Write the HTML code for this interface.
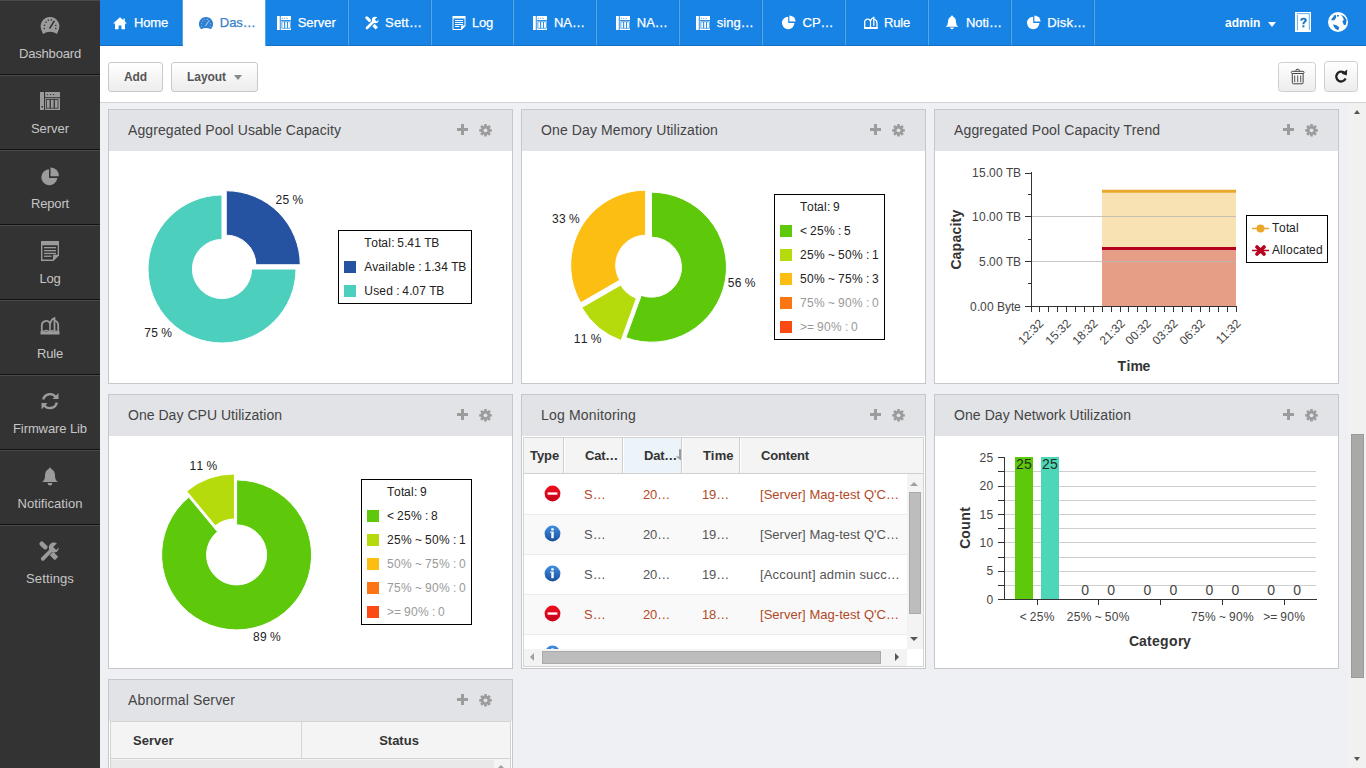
<!DOCTYPE html>
<html><head><meta charset="utf-8"><style>
*{box-sizing:border-box;margin:0;padding:0}
html,body{width:1366px;height:768px;overflow:hidden;background:#eff0f4;font-family:"Liberation Sans",sans-serif}
.abs{position:absolute}
#side{position:absolute;left:0;top:0;width:100px;height:768px;background:#333333}
.si{position:absolute;left:0;width:100px;height:75px;border-bottom:1px solid #111;box-shadow:inset 0 1px 0 #4a4a4a}
.si.last{border-bottom:none}
.si .lbl{position:absolute;left:0;width:100px;top:46px;text-align:center;font-size:13px;color:#c6c6c6;line-height:16px}
.si svg{position:absolute;left:40px;top:16px}
#nav{position:absolute;left:100px;top:0;width:1266px;height:46px;background:#1683e5;box-shadow:inset 0 -1px 0 #1b6fc0}
.tab{position:absolute;top:0;height:45px;border-right:1px solid #4ea8f0;box-shadow:inset -1px 0 0 #1d7ccc;color:#fff;font-size:13px}
.tab .tc{position:absolute;left:0;right:0;top:0;height:45px;display:flex;align-items:center;justify-content:center;padding-right:1.5px}
.tab .tc svg{margin-right:5.5px;flex:none}
.tab .tc span{line-height:16px;white-space:nowrap;-webkit-text-stroke:0.25px currentColor}
.tab .tc.tr{padding-left:7.9px}
.tab.act{background:#fff;color:#3a7fc8;box-shadow:none;height:46px}
#tool{position:absolute;left:100px;top:46px;width:1266px;height:57px;background:#fff;border-bottom:1px solid #d3d4d8}
.btn{position:absolute;height:30px;border:1px solid #c9c9c9;border-radius:3px;background:linear-gradient(#ffffff,#ececec);font-size:12px;font-weight:bold;color:#555;line-height:28px;text-align:center}
.panel{position:absolute;width:405px;height:275px;border:1px solid #c5c7cc;background:#fff}
.ph{position:absolute;left:0;top:0;width:403px;height:41px;background:#e2e3e7}
.ph .tt{position:absolute;left:19px;top:12px;font-size:14px;color:#444;line-height:16px;white-space:nowrap}
.ph svg{position:absolute}
#sb{position:absolute;left:1348px;top:103px;width:18px;height:665px;background:#f1f1f1}
</style></head><body>

<div id="side">
<div class="si" style="top:0px"><svg width="20" height="19" viewBox="0 0 20 19" style="top:16px"><path d="M10 1A9.3 9.3 0 0 0 1.2 13.5L3 18Q10 13.5 17 18L18.8 13.5A9.3 9.3 0 0 0 10 1Z" fill="#9b9b9b"/><g fill="#333"><circle cx="4.3" cy="12.5" r=".8"/><circle cx="4.5" cy="9.2" r=".8"/><circle cx="6" cy="6.3" r=".8"/><circle cx="8.3" cy="4.3" r=".8"/><circle cx="11.3" cy="3.9" r=".8"/><circle cx="14.2" cy="5.3" r=".8"/><circle cx="15.8" cy="9.5" r=".8"/><circle cx="15.8" cy="12.5" r=".8"/></g><path d="M9.5 12.5L14 5.5" stroke="#333" stroke-width="1.4"/></svg><div class="lbl" style="letter-spacing:-0.177px">Dashboard</div></div>
<div class="si" style="top:75px"><svg width="20" height="20" viewBox="0 0 20 20" style="top:16px"><rect x="0" y="1" width="20" height="18" fill="#9b9b9b"/><g fill="#333"><rect x="4" y="1" width="1.1" height="18"/><rect x="5" y="6.2" width="15" height="1"/><circle cx="7.6" cy="3.6" r=".7"/><circle cx="10.6" cy="3.6" r=".7"/><circle cx="13.6" cy="3.6" r=".7"/><rect x="1.6" y="15" width="1.4" height="1.6"/></g><g fill="none" stroke="#333" stroke-width=".8"><rect x="6.4" y="8.4" width="3.6" height="8.8"/><rect x="10.4" y="8.4" width="3.6" height="8.8"/><rect x="14.4" y="8.4" width="3.6" height="8.8"/></g></svg><div class="lbl" style="letter-spacing:-0.048px">Server</div></div>
<div class="si" style="top:150px"><svg width="20" height="20" viewBox="0 0 20 20" style="top:16px"><path d="M9 3.2A8 8 0 1 0 17.3 12H9Z" fill="#9b9b9b"/><path d="M10.5 1.5A8 8 0 0 1 18.8 10.3H10.5Z" fill="#9b9b9b"/></svg><div class="lbl" style="letter-spacing:-0.170px">Report</div></div>
<div class="si" style="top:225px"><svg width="20" height="21" viewBox="0 0 20 21" style="top:16px"><path d="M1 0H19V14.5L13.5 20H1Z" fill="#9b9b9b"/><path d="M2.4 4.3H17.7V13.8H13V18.6H2.4Z" fill="#333"/><g fill="#9b9b9b"><rect x="4" y="6" width="12" height="1.3"/><rect x="4" y="9" width="12" height="1.3"/><rect x="4" y="11.8" width="12" height="1.3"/><rect x="4" y="14.6" width="7.5" height="1.3"/></g></svg><div class="lbl" style="letter-spacing:-0.230px">Log</div></div>
<div class="si" style="top:300px"><svg width="20" height="20" viewBox="0 0 20 20" style="top:16px"><path d="M1.8 17V9A4.3 4.3 0 0 1 10 7.5Q11.5 3.2 14.5 2.2V14" fill="none" stroke="#9b9b9b" stroke-width="1.8"/><path d="M14.5 4.5Q18.2 5.5 18.2 9.5V17" fill="none" stroke="#9b9b9b" stroke-width="1.8"/><path d="M10 7.5V16" stroke="#9b9b9b" stroke-width="1.6"/><rect x="0.5" y="15.5" width="19" height="3" fill="#9b9b9b"/><path d="M2.5 15.8Q6 13 9.8 15.8Q13 13.5 17.5 15.8" fill="none" stroke="#9b9b9b" stroke-width="1.5"/></svg><div class="lbl" style="letter-spacing:-0.184px">Rule</div></div>
<div class="si" style="top:375px"><svg width="20" height="20" viewBox="0 0 20 20" style="top:16px"><path d="M16 6.5A7 7 0 0 0 3.2 8.5" fill="none" stroke="#9b9b9b" stroke-width="2.4"/><path d="M12.5 8H18.5V2Z" fill="#9b9b9b"/><path d="M3.8 13.5A7 7 0 0 0 16.8 11.5" fill="none" stroke="#9b9b9b" stroke-width="2.4"/><path d="M7.5 12H1.5V18.5Z" fill="#9b9b9b"/></svg><div class="lbl" style="letter-spacing:-0.094px">Firmware Lib</div></div>
<div class="si" style="top:450px"><svg width="20" height="20" viewBox="0 0 20 20" style="top:16px"><path d="M10 1.5Q11 1.5 11.3 3Q15 4.5 15 10Q15 14 18 16H2Q5 14 5 10Q5 4.5 8.7 3Q9 1.5 10 1.5Z" fill="#9b9b9b"/><path d="M7.5 17H12.5Q12 19.5 10 19.5Q8 19.5 7.5 17Z" fill="#9b9b9b"/></svg><div class="lbl" style="letter-spacing:0.058px">Notification</div></div>
<div class="si last" style="top:525px"><svg width="22" height="22" viewBox="0 0 22 22" style="top:16px;left:39px"><path d="M2.8 2.8L6.2 6.2" stroke="#9b9b9b" stroke-width="4.6" stroke-linecap="round"/><path d="M12.5 12.5L17.5 17.5" stroke="#9b9b9b" stroke-width="4.8"/><path d="M3.8 17.8L11.5 10" stroke="#9b9b9b" stroke-width="3.8" stroke-linecap="round"/><circle cx="14.8" cy="6.6" r="5" fill="#9b9b9b"/><path d="M14.2 6L19 1.2L22 4.2L17.2 9Z" fill="#333"/></svg><div class="lbl" style="letter-spacing:0.128px">Settings</div></div>
</div>
<div id="nav">
<div class="tab" style="left:0.0px;width:82.9px"><div class="tc"><svg width="16" height="14" viewBox="0 0 16 14"><path d="M8 1.3L1 7.6H3V13.2H6.6V9.6H9.4V13.2H13V7.6H15L12.8 5.6V2.4H11.4V4.3Z" fill="#fff"/></svg><span style="letter-spacing:-0.169px">Home</span></div></div>
<div class="tab act" style="left:82.9px;width:82.9px"><div class="tc tr"><svg width="16" height="14" viewBox="0 0 16 14"><path d="M8 1A7 7 0 0 0 1.5 10.8L3 13.3Q8 10.5 13 13.3L14.5 10.8A7 7 0 0 0 8 1Z" fill="#2f80d1"/><g fill="#9cc5ee"><circle cx="3.6" cy="10.3" r=".55"/><circle cx="3.6" cy="7.6" r=".55"/><circle cx="4.8" cy="5" r=".55"/><circle cx="6.8" cy="3.5" r=".55"/><circle cx="9.3" cy="3.4" r=".55"/><circle cx="12.4" cy="7.6" r=".55"/><circle cx="12.4" cy="10.3" r=".55"/></g><path d="M7.4 10L11.2 4.2" stroke="#9cc5ee" stroke-width="1.1"/></svg><span style="letter-spacing:-0.030px">Das…</span></div></div>
<div class="tab" style="left:165.8px;width:82.9px"><div class="tc"><svg width="16" height="14" viewBox="0 0 16 14"><rect x="1" y="0" width="14" height="14" fill="#fff"/><g fill="#1783e2"><rect x="3.8" y="0" width=".9" height="14"/><rect x="4.7" y="4.1" width="10.3" height=".9"/><circle cx="6.6" cy="2.2" r=".5"/><circle cx="8.8" cy="2.2" r=".5"/><circle cx="11" cy="2.2" r=".5"/></g><g fill="none" stroke="#1783e2" stroke-width=".7"><rect x="5.9" y="5.8" width="2.6" height="6.4"/><rect x="8.8" y="5.8" width="2.6" height="6.4"/><rect x="11.7" y="5.8" width="2.6" height="6.4"/></g></svg><span style="letter-spacing:-0.048px">Server</span></div></div>
<div class="tab" style="left:248.7px;width:82.9px"><div class="tc tr"><svg width="16" height="14" viewBox="0 0 16 14"><path d="M2.8 1.8L5.4 4.4" stroke="#fff" stroke-width="3" stroke-linecap="round"/><path d="M9.5 9L12.8 12.3" stroke="#fff" stroke-width="3.2"/><path d="M3 12L9 6" stroke="#fff" stroke-width="2.6" stroke-linecap="round"/><circle cx="11.2" cy="4" r="3.3" fill="#fff"/><path d="M10.8 3.6L14 0.4L16 2.4L12.8 5.6Z" fill="#1783e2"/></svg><span style="letter-spacing:0.175px">Sett…</span></div></div>
<div class="tab" style="left:331.6px;width:82.9px"><div class="tc"><svg width="16" height="14" viewBox="0 0 16 14"><path d="M1.5 0H14.5V10L10.5 14H1.5Z" fill="#fff"/><path d="M2.5 2.4H13.5V9.5H10V13H2.5Z" fill="#1783e2"/><g fill="#fff"><rect x="4" y="4" width="8" height="1"/><rect x="4" y="6" width="8" height="1"/><rect x="4" y="8" width="8" height="1"/><rect x="4" y="10" width="4.5" height="1"/></g></svg><span style="letter-spacing:-0.230px">Log</span></div></div>
<div class="tab" style="left:414.5px;width:82.9px"><div class="tc tr"><svg width="16" height="14" viewBox="0 0 16 14"><rect x="1" y="0" width="14" height="14" fill="#fff"/><g fill="#1783e2"><rect x="3.8" y="0" width=".9" height="14"/><rect x="4.7" y="4.1" width="10.3" height=".9"/><circle cx="6.6" cy="2.2" r=".5"/><circle cx="8.8" cy="2.2" r=".5"/><circle cx="11" cy="2.2" r=".5"/></g><g fill="none" stroke="#1783e2" stroke-width=".7"><rect x="5.9" y="5.8" width="2.6" height="6.4"/><rect x="8.8" y="5.8" width="2.6" height="6.4"/><rect x="11.7" y="5.8" width="2.6" height="6.4"/></g></svg><span style="letter-spacing:-0.020px">NA…</span></div></div>
<div class="tab" style="left:497.4px;width:82.9px"><div class="tc tr"><svg width="16" height="14" viewBox="0 0 16 14"><rect x="1" y="0" width="14" height="14" fill="#fff"/><g fill="#1783e2"><rect x="3.8" y="0" width=".9" height="14"/><rect x="4.7" y="4.1" width="10.3" height=".9"/><circle cx="6.6" cy="2.2" r=".5"/><circle cx="8.8" cy="2.2" r=".5"/><circle cx="11" cy="2.2" r=".5"/></g><g fill="none" stroke="#1783e2" stroke-width=".7"><rect x="5.9" y="5.8" width="2.6" height="6.4"/><rect x="8.8" y="5.8" width="2.6" height="6.4"/><rect x="11.7" y="5.8" width="2.6" height="6.4"/></g></svg><span style="letter-spacing:-0.020px">NA…</span></div></div>
<div class="tab" style="left:580.3px;width:82.9px"><div class="tc tr"><svg width="16" height="14" viewBox="0 0 16 14"><rect x="1" y="0" width="14" height="14" fill="#fff"/><g fill="#1783e2"><rect x="3.8" y="0" width=".9" height="14"/><rect x="4.7" y="4.1" width="10.3" height=".9"/><circle cx="6.6" cy="2.2" r=".5"/><circle cx="8.8" cy="2.2" r=".5"/><circle cx="11" cy="2.2" r=".5"/></g><g fill="none" stroke="#1783e2" stroke-width=".7"><rect x="5.9" y="5.8" width="2.6" height="6.4"/><rect x="8.8" y="5.8" width="2.6" height="6.4"/><rect x="11.7" y="5.8" width="2.6" height="6.4"/></g></svg><span style="letter-spacing:0.030px">sing…</span></div></div>
<div class="tab" style="left:663.2px;width:82.9px"><div class="tc tr"><svg width="16" height="15" viewBox="0 0 16 15"><path d="M7.2 1.8A6.2 6.2 0 1 0 13.4 8H7.2Z" fill="#fff"/><path d="M8.4 0.4A6.2 6.2 0 0 1 14.6 6.6H8.4Z" fill="#fff"/></svg><span style="letter-spacing:-0.020px">CP…</span></div></div>
<div class="tab" style="left:746.1px;width:82.9px"><div class="tc"><svg width="16" height="13" viewBox="0 0 16 13"><path d="M1.7 12V6A3 3 0 0 1 7.5 5Q8.5 2 10.8 1.3V10" fill="none" stroke="#fff" stroke-width="1.3"/><path d="M10.8 3Q14 4 14 7V12" fill="none" stroke="#fff" stroke-width="1.3"/><path d="M7.5 5V11.5" stroke="#fff" stroke-width="1.2"/><rect x="1" y="11" width="13.7" height="2" fill="#fff"/></svg><span style="letter-spacing:-0.184px">Rule</span></div></div>
<div class="tab" style="left:829.0px;width:82.9px"><div class="tc tr"><svg width="16" height="15" viewBox="0 0 16 15"><path d="M8 0.5Q9 0.5 9.2 1.8Q12 3 12 7Q12 10.5 14.3 11.8H1.7Q4 10.5 4 7Q4 3 6.8 1.8Q7 0.5 8 0.5Z" fill="#fff"/><path d="M6 12.6H10Q10 14.3 8 14.3Q6 14.3 6 12.6Z" fill="#fff"/></svg><span style="letter-spacing:-0.024px">Noti…</span></div></div>
<div class="tab" style="left:911.9px;width:82.9px"><div class="tc tr"><svg width="16" height="15" viewBox="0 0 16 15"><path d="M7.2 1.8A6.2 6.2 0 1 0 13.4 8H7.2Z" fill="#fff"/><path d="M8.4 0.4A6.2 6.2 0 0 1 14.6 6.6H8.4Z" fill="#fff"/></svg><span style="letter-spacing:0.145px">Disk…</span></div></div>
<div class="abs" style="left:1125px;top:15px;font-size:12px;font-weight:bold;color:#fff;line-height:16px">admin</div>
<div class="abs" style="left:1168px;top:22px;width:0;height:0;border-left:4px solid transparent;border-right:4px solid transparent;border-top:5px solid #fff"></div>
<svg class="abs" style="left:1194px;top:12px" width="18" height="20" viewBox="0 0 18 20"><rect x="1" y="0" width="16" height="20" fill="#fff"/><path d="M3 1.6H15.3V18M3.4 3V18.5" fill="none" stroke="#1783e2" stroke-width="0.9" opacity=".75"/><path d="M6.2 8.6Q6.2 5.7 9.5 5.7Q12.8 5.8 12.8 8.3Q12.8 9.8 11.3 10.6Q10.4 11.1 10.4 12.3H8.4Q8.3 10.3 9.7 9.4Q10.6 8.9 10.6 8.3Q10.5 7.4 9.5 7.4Q8.3 7.4 8.3 8.8Z" fill="#1a74c8"/><rect x="8.4" y="13.3" width="2" height="2" fill="#1a74c8"/></svg>
<svg class="abs" style="left:1227px;top:12px" width="21" height="20" viewBox="0 0 21 20"><circle cx="11" cy="10" r="10" fill="#fff"/><g fill="#1a7ad4"><path d="M3.8 8.2L8 2.6Q9.6 3.8 9.1 5.6L7.4 8.2Z"/><circle cx="10.9" cy="3.8" r="1"/><path d="M14.2 2.4Q18.2 4.3 19.6 8L18.9 12.5L17 13.2L15.4 9.4L16.9 7.4Q15.6 5 14.2 2.4Z"/><path d="M6 12.6Q9.2 12.2 12.4 15.4L11.2 18.2Q7.8 17.6 6 12.6Z"/></g></svg>
</div>
<div id="tool">
  <div class="btn" style="left:8px;top:16px;width:55px;letter-spacing:-0.109px">Add</div>
  <div class="btn" style="left:71px;top:16px;width:87px;padding-right:16px"><span style="letter-spacing:-0.056px">Layout</span><span style="position:absolute;left:62px;top:12px;width:0;height:0;border-left:4px solid transparent;border-right:4px solid transparent;border-top:5px solid #888"></span></div>
  <svg class="abs" style="left:1178px;top:16px" width="38" height="30" viewBox="0 0 38 30"><defs><linearGradient id="bg1" x1="0" y1="0" x2="0" y2="1"><stop offset="0" stop-color="#fff"/><stop offset="1" stop-color="#ececec"/></linearGradient></defs><rect x="0.5" y="0.5" width="37" height="29" rx="3" fill="url(#bg1)" stroke="#cfcfcf"/><rect x="13.4" y="9.3" width="12.6" height="2.2" rx="1" fill="none" stroke="#444" stroke-width="1"/><path d="M18 9.3V8.3Q18 7.3 19 7.3H20.4Q21.4 7.3 21.4 8.3V9.3M14.3 11.5V20.7Q14.3 21.8 15.4 21.8H24Q25.1 21.8 25.1 20.7V11.5" fill="none" stroke="#444" stroke-width="1"/><path d="M16.7 13.5V20.2M19.7 13.5V20.2M22.7 13.5V20.2" stroke="#444" stroke-width=".9"/></svg>
  <svg class="abs" style="left:1224px;top:15px" width="34" height="31" viewBox="0 0 34 31"><rect x="0.5" y="0.5" width="33" height="30" rx="3" fill="url(#bg1)" stroke="#cfcfcf"/><path d="M20.8 12.3A4.9 4.9 0 1 0 21.6 17.6" fill="none" stroke="#222" stroke-width="2.3"/><path d="M17.6 12.8L22.8 14.4L23.2 8.6Z" fill="#222"/></svg>
</div>
<div class="panel" style="left:108px;top:109px;height:275px"><div class="ph"><div class="tt" style="letter-spacing:0.093px">Aggregated Pool Usable Capacity</div><svg style="left:348px;top:14px" width="40" height="15" viewBox="0 0 40 15"><path d="M4 0H7V4H11V7H7V11H4V7H0V4H4Z" fill="#9c9c9d"/><g transform="translate(28.5,6.3)" fill="#9c9c9d"><circle r="4.6"/><rect x="-1.35" y="-6.3" width="2.7" height="3" rx=".4" transform="rotate(0)"/><rect x="-1.35" y="-6.3" width="2.7" height="3" rx=".4" transform="rotate(45)"/><rect x="-1.35" y="-6.3" width="2.7" height="3" rx=".4" transform="rotate(90)"/><rect x="-1.35" y="-6.3" width="2.7" height="3" rx=".4" transform="rotate(135)"/><rect x="-1.35" y="-6.3" width="2.7" height="3" rx=".4" transform="rotate(180)"/><rect x="-1.35" y="-6.3" width="2.7" height="3" rx=".4" transform="rotate(225)"/><rect x="-1.35" y="-6.3" width="2.7" height="3" rx=".4" transform="rotate(270)"/><rect x="-1.35" y="-6.3" width="2.7" height="3" rx=".4" transform="rotate(315)"/><circle r="1.9" fill="#e2e3e7"/></g></svg></div></div>
<div class="panel" style="left:521px;top:109px;height:275px"><div class="ph"><div class="tt" style="letter-spacing:0.105px">One Day Memory Utilization</div><svg style="left:348px;top:14px" width="40" height="15" viewBox="0 0 40 15"><path d="M4 0H7V4H11V7H7V11H4V7H0V4H4Z" fill="#9c9c9d"/><g transform="translate(28.5,6.3)" fill="#9c9c9d"><circle r="4.6"/><rect x="-1.35" y="-6.3" width="2.7" height="3" rx=".4" transform="rotate(0)"/><rect x="-1.35" y="-6.3" width="2.7" height="3" rx=".4" transform="rotate(45)"/><rect x="-1.35" y="-6.3" width="2.7" height="3" rx=".4" transform="rotate(90)"/><rect x="-1.35" y="-6.3" width="2.7" height="3" rx=".4" transform="rotate(135)"/><rect x="-1.35" y="-6.3" width="2.7" height="3" rx=".4" transform="rotate(180)"/><rect x="-1.35" y="-6.3" width="2.7" height="3" rx=".4" transform="rotate(225)"/><rect x="-1.35" y="-6.3" width="2.7" height="3" rx=".4" transform="rotate(270)"/><rect x="-1.35" y="-6.3" width="2.7" height="3" rx=".4" transform="rotate(315)"/><circle r="1.9" fill="#e2e3e7"/></g></svg></div></div>
<div class="panel" style="left:934px;top:109px;height:275px"><div class="ph"><div class="tt" style="letter-spacing:0.129px">Aggregated Pool Capacity Trend</div><svg style="left:348px;top:14px" width="40" height="15" viewBox="0 0 40 15"><path d="M4 0H7V4H11V7H7V11H4V7H0V4H4Z" fill="#9c9c9d"/><g transform="translate(28.5,6.3)" fill="#9c9c9d"><circle r="4.6"/><rect x="-1.35" y="-6.3" width="2.7" height="3" rx=".4" transform="rotate(0)"/><rect x="-1.35" y="-6.3" width="2.7" height="3" rx=".4" transform="rotate(45)"/><rect x="-1.35" y="-6.3" width="2.7" height="3" rx=".4" transform="rotate(90)"/><rect x="-1.35" y="-6.3" width="2.7" height="3" rx=".4" transform="rotate(135)"/><rect x="-1.35" y="-6.3" width="2.7" height="3" rx=".4" transform="rotate(180)"/><rect x="-1.35" y="-6.3" width="2.7" height="3" rx=".4" transform="rotate(225)"/><rect x="-1.35" y="-6.3" width="2.7" height="3" rx=".4" transform="rotate(270)"/><rect x="-1.35" y="-6.3" width="2.7" height="3" rx=".4" transform="rotate(315)"/><circle r="1.9" fill="#e2e3e7"/></g></svg></div></div>
<div class="panel" style="left:108px;top:394px;height:275px"><div class="ph"><div class="tt" style="letter-spacing:0.032px">One Day CPU Utilization</div><svg style="left:348px;top:14px" width="40" height="15" viewBox="0 0 40 15"><path d="M4 0H7V4H11V7H7V11H4V7H0V4H4Z" fill="#9c9c9d"/><g transform="translate(28.5,6.3)" fill="#9c9c9d"><circle r="4.6"/><rect x="-1.35" y="-6.3" width="2.7" height="3" rx=".4" transform="rotate(0)"/><rect x="-1.35" y="-6.3" width="2.7" height="3" rx=".4" transform="rotate(45)"/><rect x="-1.35" y="-6.3" width="2.7" height="3" rx=".4" transform="rotate(90)"/><rect x="-1.35" y="-6.3" width="2.7" height="3" rx=".4" transform="rotate(135)"/><rect x="-1.35" y="-6.3" width="2.7" height="3" rx=".4" transform="rotate(180)"/><rect x="-1.35" y="-6.3" width="2.7" height="3" rx=".4" transform="rotate(225)"/><rect x="-1.35" y="-6.3" width="2.7" height="3" rx=".4" transform="rotate(270)"/><rect x="-1.35" y="-6.3" width="2.7" height="3" rx=".4" transform="rotate(315)"/><circle r="1.9" fill="#e2e3e7"/></g></svg></div></div>
<div class="panel" style="left:521px;top:394px;height:275px"><div class="ph"><div class="tt" style="letter-spacing:0.170px">Log Monitoring</div><svg style="left:348px;top:14px" width="40" height="15" viewBox="0 0 40 15"><path d="M4 0H7V4H11V7H7V11H4V7H0V4H4Z" fill="#9c9c9d"/><g transform="translate(28.5,6.3)" fill="#9c9c9d"><circle r="4.6"/><rect x="-1.35" y="-6.3" width="2.7" height="3" rx=".4" transform="rotate(0)"/><rect x="-1.35" y="-6.3" width="2.7" height="3" rx=".4" transform="rotate(45)"/><rect x="-1.35" y="-6.3" width="2.7" height="3" rx=".4" transform="rotate(90)"/><rect x="-1.35" y="-6.3" width="2.7" height="3" rx=".4" transform="rotate(135)"/><rect x="-1.35" y="-6.3" width="2.7" height="3" rx=".4" transform="rotate(180)"/><rect x="-1.35" y="-6.3" width="2.7" height="3" rx=".4" transform="rotate(225)"/><rect x="-1.35" y="-6.3" width="2.7" height="3" rx=".4" transform="rotate(270)"/><rect x="-1.35" y="-6.3" width="2.7" height="3" rx=".4" transform="rotate(315)"/><circle r="1.9" fill="#e2e3e7"/></g></svg></div></div>
<div class="panel" style="left:934px;top:394px;height:275px"><div class="ph"><div class="tt" style="letter-spacing:0.072px">One Day Network Utilization</div><svg style="left:348px;top:14px" width="40" height="15" viewBox="0 0 40 15"><path d="M4 0H7V4H11V7H7V11H4V7H0V4H4Z" fill="#9c9c9d"/><g transform="translate(28.5,6.3)" fill="#9c9c9d"><circle r="4.6"/><rect x="-1.35" y="-6.3" width="2.7" height="3" rx=".4" transform="rotate(0)"/><rect x="-1.35" y="-6.3" width="2.7" height="3" rx=".4" transform="rotate(45)"/><rect x="-1.35" y="-6.3" width="2.7" height="3" rx=".4" transform="rotate(90)"/><rect x="-1.35" y="-6.3" width="2.7" height="3" rx=".4" transform="rotate(135)"/><rect x="-1.35" y="-6.3" width="2.7" height="3" rx=".4" transform="rotate(180)"/><rect x="-1.35" y="-6.3" width="2.7" height="3" rx=".4" transform="rotate(225)"/><rect x="-1.35" y="-6.3" width="2.7" height="3" rx=".4" transform="rotate(270)"/><rect x="-1.35" y="-6.3" width="2.7" height="3" rx=".4" transform="rotate(315)"/><circle r="1.9" fill="#e2e3e7"/></g></svg></div></div>
<div class="panel" style="left:108px;top:679px;height:120px"><div class="ph"><div class="tt" style="letter-spacing:0.131px">Abnormal Server</div><svg style="left:348px;top:14px" width="40" height="15" viewBox="0 0 40 15"><path d="M4 0H7V4H11V7H7V11H4V7H0V4H4Z" fill="#9c9c9d"/><g transform="translate(28.5,6.3)" fill="#9c9c9d"><circle r="4.6"/><rect x="-1.35" y="-6.3" width="2.7" height="3" rx=".4" transform="rotate(0)"/><rect x="-1.35" y="-6.3" width="2.7" height="3" rx=".4" transform="rotate(45)"/><rect x="-1.35" y="-6.3" width="2.7" height="3" rx=".4" transform="rotate(90)"/><rect x="-1.35" y="-6.3" width="2.7" height="3" rx=".4" transform="rotate(135)"/><rect x="-1.35" y="-6.3" width="2.7" height="3" rx=".4" transform="rotate(180)"/><rect x="-1.35" y="-6.3" width="2.7" height="3" rx=".4" transform="rotate(225)"/><rect x="-1.35" y="-6.3" width="2.7" height="3" rx=".4" transform="rotate(270)"/><rect x="-1.35" y="-6.3" width="2.7" height="3" rx=".4" transform="rotate(315)"/><circle r="1.9" fill="#e2e3e7"/></g></svg></div></div>
<div class="abs" style="left:523px;top:437px;width:401px;height:230px;border:1px solid #d4d4d4;background:#fff;overflow:hidden">
<div class="abs" style="left:0;top:0;width:399px;height:36px;background:#f4f4f4;border-bottom:1px solid #d0d0d0"></div>
<div class="abs" style="left:99px;top:0;width:58px;height:35px;background:#ecf3f9"></div>
<div class="abs" style="left:39px;top:0;width:1px;height:35px;background:#cdcdcd"></div><div class="abs" style="left:40px;top:0;width:1px;height:35px;background:#fff"></div>
<div class="abs" style="left:98px;top:0;width:1px;height:35px;background:#cdcdcd"></div><div class="abs" style="left:99px;top:0;width:1px;height:35px;background:#fff"></div>
<div class="abs" style="left:157px;top:0;width:1px;height:35px;background:#cdcdcd"></div><div class="abs" style="left:158px;top:0;width:1px;height:35px;background:#fff"></div>
<div class="abs" style="left:215px;top:0;width:1px;height:35px;background:#cdcdcd"></div><div class="abs" style="left:216px;top:0;width:1px;height:35px;background:#fff"></div>
<div class="abs" style="left:6px;top:10px;font-size:13px;font-weight:bold;color:#333;line-height:16px;letter-spacing:-0.085px">Type</div>
<div class="abs" style="left:61px;top:10px;font-size:13px;font-weight:bold;color:#333;line-height:16px;letter-spacing:-0.237px">Cat…</div>
<div class="abs" style="left:120px;top:10px;font-size:13px;font-weight:bold;color:#333;line-height:16px;letter-spacing:-0.237px">Dat…</div>
<div class="abs" style="left:179px;top:10px;font-size:13px;font-weight:bold;color:#333;line-height:16px;letter-spacing:0.165px">Time</div>
<div class="abs" style="left:237px;top:10px;font-size:13px;font-weight:bold;color:#333;line-height:16px;letter-spacing:-0.157px">Content</div>
<svg class="abs" style="left:151px;top:11px" width="6" height="12" viewBox="0 0 6 12"><path d="M4 0.3H6V11.5L0.6 7.4H4Z" fill="#999"/></svg>
<div class="abs" style="left:0;top:37px;width:383px;height:40px;background:#fff;border-bottom:1px solid #ececec"></div>
<div class="abs" style="left:19.5px;top:47px;width:17px;height:17px"><svg width="17" height="17" viewBox="0 0 17 17"><defs><linearGradient id="eg" x1="0" y1="0" x2="0" y2="1"><stop offset="0" stop-color="#f0101e"/><stop offset="1" stop-color="#c8001a"/></linearGradient></defs><circle cx="8.5" cy="8.5" r="7.9" fill="url(#eg)"/><rect x="3.6" y="7.4" width="9.8" height="2.3" fill="#fff"/></svg></div>
<div class="abs" style="left:60px;top:49px;font-size:13px;color:#b04a28;line-height:16px;white-space:nowrap;letter-spacing:0.165px">S…</div>
<div class="abs" style="left:119px;top:49px;font-size:13px;color:#b04a28;line-height:16px;white-space:nowrap;letter-spacing:-0.153px">20…</div>
<div class="abs" style="left:178px;top:49px;font-size:13px;color:#b04a28;line-height:16px;white-space:nowrap;letter-spacing:-0.153px">19…</div>
<div class="abs" style="left:236px;top:49px;font-size:13px;color:#b04a28;line-height:16px;white-space:nowrap;letter-spacing:0.032px">[Server] Mag-test Q'C…</div>
<div class="abs" style="left:0;top:77px;width:383px;height:40px;background:#f9f9f9;border-bottom:1px solid #ececec"></div>
<div class="abs" style="left:19.5px;top:87px;width:17px;height:17px"><svg width="17" height="17" viewBox="0 0 17 17"><defs><linearGradient id="ig" x1="0" y1="0" x2="0" y2="1"><stop offset="0" stop-color="#3f8fe0"/><stop offset="1" stop-color="#1a4f9e"/></linearGradient></defs><circle cx="8.5" cy="8.5" r="7.9" fill="url(#ig)"/><rect x="7.3" y="3.3" width="2.4" height="2.2" fill="#fff"/><rect x="7.3" y="6.6" width="2.4" height="6.6" fill="#fff"/><rect x="6.2" y="6.6" width="1.3" height="1.2" fill="#fff"/></svg></div>
<div class="abs" style="left:60px;top:89px;font-size:13px;color:#555;line-height:16px;white-space:nowrap;letter-spacing:0.165px">S…</div>
<div class="abs" style="left:119px;top:89px;font-size:13px;color:#555;line-height:16px;white-space:nowrap;letter-spacing:-0.153px">20…</div>
<div class="abs" style="left:178px;top:89px;font-size:13px;color:#555;line-height:16px;white-space:nowrap;letter-spacing:-0.153px">19…</div>
<div class="abs" style="left:236px;top:89px;font-size:13px;color:#555;line-height:16px;white-space:nowrap;letter-spacing:0.032px">[Server] Mag-test Q'C…</div>
<div class="abs" style="left:0;top:117px;width:383px;height:40px;background:#fff;border-bottom:1px solid #ececec"></div>
<div class="abs" style="left:19.5px;top:127px;width:17px;height:17px"><svg width="17" height="17" viewBox="0 0 17 17"><defs><linearGradient id="ig" x1="0" y1="0" x2="0" y2="1"><stop offset="0" stop-color="#3f8fe0"/><stop offset="1" stop-color="#1a4f9e"/></linearGradient></defs><circle cx="8.5" cy="8.5" r="7.9" fill="url(#ig)"/><rect x="7.3" y="3.3" width="2.4" height="2.2" fill="#fff"/><rect x="7.3" y="6.6" width="2.4" height="6.6" fill="#fff"/><rect x="6.2" y="6.6" width="1.3" height="1.2" fill="#fff"/></svg></div>
<div class="abs" style="left:60px;top:129px;font-size:13px;color:#555;line-height:16px;white-space:nowrap;letter-spacing:0.165px">S…</div>
<div class="abs" style="left:119px;top:129px;font-size:13px;color:#555;line-height:16px;white-space:nowrap;letter-spacing:-0.153px">20…</div>
<div class="abs" style="left:178px;top:129px;font-size:13px;color:#555;line-height:16px;white-space:nowrap;letter-spacing:-0.153px">19…</div>
<div class="abs" style="left:236px;top:129px;font-size:13px;color:#555;line-height:16px;white-space:nowrap;letter-spacing:0.164px">[Account] admin succ…</div>
<div class="abs" style="left:0;top:157px;width:383px;height:40px;background:#f9f9f9;border-bottom:1px solid #ececec"></div>
<div class="abs" style="left:19.5px;top:167px;width:17px;height:17px"><svg width="17" height="17" viewBox="0 0 17 17"><defs><linearGradient id="eg" x1="0" y1="0" x2="0" y2="1"><stop offset="0" stop-color="#f0101e"/><stop offset="1" stop-color="#c8001a"/></linearGradient></defs><circle cx="8.5" cy="8.5" r="7.9" fill="url(#eg)"/><rect x="3.6" y="7.4" width="9.8" height="2.3" fill="#fff"/></svg></div>
<div class="abs" style="left:60px;top:169px;font-size:13px;color:#b04a28;line-height:16px;white-space:nowrap;letter-spacing:0.165px">S…</div>
<div class="abs" style="left:119px;top:169px;font-size:13px;color:#b04a28;line-height:16px;white-space:nowrap;letter-spacing:-0.153px">20…</div>
<div class="abs" style="left:178px;top:169px;font-size:13px;color:#b04a28;line-height:16px;white-space:nowrap;letter-spacing:-0.153px">18…</div>
<div class="abs" style="left:236px;top:169px;font-size:13px;color:#b04a28;line-height:16px;white-space:nowrap;letter-spacing:0.032px">[Server] Mag-test Q'C…</div>
<div class="abs" style="left:0;top:197px;width:383px;height:40px;background:#fff;border-bottom:1px solid #ececec"></div>
<div class="abs" style="left:19.5px;top:207px;width:17px;height:17px"><svg width="17" height="17" viewBox="0 0 17 17"><defs><linearGradient id="ig" x1="0" y1="0" x2="0" y2="1"><stop offset="0" stop-color="#3f8fe0"/><stop offset="1" stop-color="#1a4f9e"/></linearGradient></defs><circle cx="8.5" cy="8.5" r="7.9" fill="url(#ig)"/><rect x="7.3" y="3.3" width="2.4" height="2.2" fill="#fff"/><rect x="7.3" y="6.6" width="2.4" height="6.6" fill="#fff"/><rect x="6.2" y="6.6" width="1.3" height="1.2" fill="#fff"/></svg></div>
<div class="abs" style="left:383px;top:36px;width:16px;height:175px;background:#f3f3f3"></div>
<div class="abs" style="left:386px;top:44px;width:0;height:0;border-left:4px solid transparent;border-right:4px solid transparent;border-bottom:4px solid #a0a0a0"></div>
<div class="abs" style="left:385px;top:54px;width:12px;height:122px;background:#bdbdbd;border:1px solid #aaa"></div>
<div class="abs" style="left:386px;top:199px;width:0;height:0;border-left:4px solid transparent;border-right:4px solid transparent;border-top:4px solid #555"></div>
<div class="abs" style="left:0;top:211px;width:383px;height:17px;background:#f3f3f3"></div>
<div class="abs" style="left:383px;top:211px;width:16px;height:17px;background:#fff"></div>
<div class="abs" style="left:6px;top:215px;width:0;height:0;border-top:4px solid transparent;border-bottom:4px solid transparent;border-right:4px solid #a0a0a0"></div>
<div class="abs" style="left:18px;top:213px;width:339px;height:13px;background:#bdbdbd;border:1px solid #aaa"></div>
<div class="abs" style="left:371px;top:215px;width:0;height:0;border-top:4px solid transparent;border-bottom:4px solid transparent;border-left:4px solid #555"></div>
</div>
<div class="abs" style="left:110px;top:721px;width:401px;height:60px;border:1px solid #d4d4d4;background:#f4f4f4">
<div class="abs" style="left:0;top:0;width:399px;height:37px;background:#f4f4f4;border-bottom:1px solid #d0d0d0"></div>
<div class="abs" style="left:190px;top:0;width:1px;height:37px;background:#d6d6d6"></div>
<div class="abs" style="left:22px;top:11px;font-size:13px;font-weight:bold;color:#333;line-height:16px">Server</div>
<div class="abs" style="left:192.5px;width:191px;text-align:center;top:11px;font-size:13px;font-weight:bold;color:#333;line-height:16px">Status</div>
<div class="abs" style="left:0;top:38px;width:383px;height:30px;background:#e9e9e9"></div>
<div class="abs" style="left:386px;top:43px;width:0;height:0;border-left:4px solid transparent;border-right:4px solid transparent;border-bottom:4px solid #a0a0a0"></div>
</div>
<svg class="abs" style="left:0;top:0;pointer-events:none" width="1366" height="768" font-family='"Liberation Sans",sans-serif'><path d="M296.00 269.00A74 74 0 1 1 222.00 195.00L222.00 239.40A29.6 29.6 0 1 0 251.60 269.00Z" fill="#4dcfbd" stroke="#fff" stroke-width="1"/><path d="M226.24 190.76A74 74 0 0 1 300.24 264.76L255.84 264.76A29.6 29.6 0 0 0 226.24 235.16Z" fill="#2652a2" stroke="#fff" stroke-width="1"/><text x="275.50 282.50 289.50 292.50" y="204" font-size="12" fill="#222" font-weight="normal" >25 %</text><text x="144.30 151.30 158.30 161.30" y="336.5" font-size="12" fill="#222" font-weight="normal" >75 %</text><rect x="338.5" y="230.5" width="133" height="73" fill="#fff" stroke="#000" stroke-width="1"/><text x="364.20 371.20 378.20 381.20 388.20 391.20 394.20 397.20 404.20 407.20 414.20 421.20 424.20 431.20" y="247" font-size="12" fill="#222" font-weight="normal" >Total: 5.41 TB</text><rect x="344" y="261" width="12" height="12" fill="#2652a2"/><text x="364.20 372.20 378.20 385.20 388.20 391.20 398.20 405.20 408.20 415.20 418.20 421.20 424.20 431.20 434.20 441.20 448.20 451.20 458.20" y="271" font-size="12" fill="#222" font-weight="normal" >Available : 1.34 TB</text><rect x="344" y="285" width="12" height="12" fill="#4dcfbd"/><text x="364.20 373.20 379.20 386.20 393.20 396.20 399.20 402.20 409.20 412.20 419.20 426.20 429.20 436.20" y="295" font-size="12" fill="#222" font-weight="normal" >Used : 4.07 TB</text><path d="M651.50 192.20A75 75 0 1 1 625.85 337.68L641.24 295.39A30 30 0 1 0 651.50 237.20Z" fill="#5ec90b" stroke="#fff" stroke-width="1"/><path d="M621.05 340.48A75 75 0 0 1 581.75 307.50L620.72 285.00A30 30 0 0 0 636.44 298.19Z" fill="#b6db0c" stroke="#fff" stroke-width="1"/><path d="M580.75 302.70A75 75 0 0 1 645.70 190.20L645.70 235.20A30 30 0 0 0 619.72 280.20Z" fill="#fcbe12" stroke="#fff" stroke-width="1"/><text x="552.00 559.00 566.00 569.00" y="223" font-size="12" fill="#222" font-weight="normal" >33 %</text><text x="727.80 734.80 741.80 744.80" y="287" font-size="12" fill="#222" font-weight="normal" >56 %</text><text x="573.70 580.70 587.70 590.70" y="343" font-size="12" fill="#222" font-weight="normal" >11 %</text><rect x="774.5" y="194.5" width="110" height="145" fill="#fff" stroke="#000" stroke-width="1"/><text x="800.00 807.00 814.00 817.00 824.00 827.00 830.00 833.00" y="211" font-size="12" fill="#222" font-weight="normal" >Total: 9</text><rect x="780" y="225" width="12" height="12" fill="#5ec90b"/><text x="800.00 807.00 810.00 817.00 824.00 835.00 838.00 841.00 844.00" y="235" font-size="12" fill="#222" font-weight="normal" >&lt; 25% : 5</text><rect x="780" y="249" width="12" height="12" fill="#b6db0c"/><text x="800.00 807.00 814.00 825.00 828.00 835.00 838.00 845.00 852.00 863.00 866.00 869.00 872.00" y="259" font-size="12" fill="#222" font-weight="normal" >25% ~ 50% : 1</text><rect x="780" y="273" width="12" height="12" fill="#fcbe12"/><text x="800.00 807.00 814.00 825.00 828.00 835.00 838.00 845.00 852.00 863.00 866.00 869.00 872.00" y="283" font-size="12" fill="#222" font-weight="normal" >50% ~ 75% : 3</text><rect x="780" y="297" width="12" height="12" fill="#fc7514"/><text x="800.00 807.00 814.00 825.00 828.00 835.00 838.00 845.00 852.00 863.00 866.00 869.00 872.00" y="307" font-size="12" fill="#999" font-weight="normal" >75% ~ 90% : 0</text><rect x="780" y="321" width="12" height="12" fill="#fb4b12"/><text x="800.00 807.00 814.00 817.00 824.00 831.00 842.00 845.00 848.00 851.00" y="331" font-size="12" fill="#999" font-weight="normal" >&gt;= 90% : 0</text><path d="M236.60 479.90A75 75 0 1 1 188.79 497.11L217.48 531.78A30 30 0 1 0 236.60 524.90Z" fill="#5ec90b" stroke="#fff" stroke-width="1"/><path d="M186.66 491.18A75 75 0 0 1 234.47 473.97L234.47 518.97A30 30 0 0 0 215.34 525.86Z" fill="#b6db0c" stroke="#fff" stroke-width="1"/><text x="189.60 196.60 203.60 206.60" y="470" font-size="12" fill="#222" font-weight="normal" >11 %</text><text x="253.00 260.00 267.00 270.00" y="641" font-size="12" fill="#222" font-weight="normal" >89 %</text><rect x="361.5" y="479.5" width="110" height="145" fill="#fff" stroke="#000" stroke-width="1"/><text x="387.00 394.00 401.00 404.00 411.00 414.00 417.00 420.00" y="496" font-size="12" fill="#222" font-weight="normal" >Total: 9</text><rect x="367" y="510" width="12" height="12" fill="#5ec90b"/><text x="387.00 394.00 397.00 404.00 411.00 422.00 425.00 428.00 431.00" y="520" font-size="12" fill="#222" font-weight="normal" >&lt; 25% : 8</text><rect x="367" y="534" width="12" height="12" fill="#b6db0c"/><text x="387.00 394.00 401.00 412.00 415.00 422.00 425.00 432.00 439.00 450.00 453.00 456.00 459.00" y="544" font-size="12" fill="#222" font-weight="normal" >25% ~ 50% : 1</text><rect x="367" y="558" width="12" height="12" fill="#fcbe12"/><text x="387.00 394.00 401.00 412.00 415.00 422.00 425.00 432.00 439.00 450.00 453.00 456.00 459.00" y="568" font-size="12" fill="#999" font-weight="normal" >50% ~ 75% : 0</text><rect x="367" y="582" width="12" height="12" fill="#fc7514"/><text x="387.00 394.00 401.00 412.00 415.00 422.00 425.00 432.00 439.00 450.00 453.00 456.00 459.00" y="592" font-size="12" fill="#999" font-weight="normal" >75% ~ 90% : 0</text><rect x="367" y="606" width="12" height="12" fill="#fb4b12"/><text x="387.00 394.00 401.00 404.00 411.00 418.00 429.00 432.00 435.00 438.00" y="616" font-size="12" fill="#999" font-weight="normal" >&gt;= 90% : 0</text><rect x="1102" y="191.5" width="134" height="57" fill="#f8e2b3"/><rect x="1102" y="248.5" width="134" height="58" fill="#e69e87"/><path d="M1031 216.5H1236" stroke="#b8b8b8" stroke-width="1" opacity="0.8"/><path d="M1031 261.5H1236" stroke="#b8b8b8" stroke-width="1" opacity="0.8"/><path d="M1102 191.3H1236" stroke="#e9a82b" stroke-width="3"/><path d="M1102 248.4H1236" stroke="#b5001f" stroke-width="3"/><path d="M1031.5 172V307" stroke="#333" stroke-width="1"/><path d="M1025 306.5H1237" stroke="#333" stroke-width="1"/><path d="M1025 173.5H1031" stroke="#333" stroke-width="1"/><path d="M1025 216.5H1031" stroke="#333" stroke-width="1"/><path d="M1025 261.5H1031" stroke="#333" stroke-width="1"/><path d="M1025 306.5H1031" stroke="#333" stroke-width="1"/><path d="M1028 194.5H1031" stroke="#333" stroke-width="1"/><path d="M1028 239.5H1031" stroke="#333" stroke-width="1"/><path d="M1028 283.5H1031" stroke="#333" stroke-width="1"/><path d="M1031.5 306V312" stroke="#333" stroke-width="1"/><path d="M1039.5 306V312" stroke="#333" stroke-width="1"/><path d="M1048.5 306V312" stroke="#333" stroke-width="1"/><path d="M1057.5 306V312" stroke="#333" stroke-width="1"/><path d="M1066.5 306V312" stroke="#333" stroke-width="1"/><path d="M1075.5 306V312" stroke="#333" stroke-width="1"/><path d="M1084.5 306V312" stroke="#333" stroke-width="1"/><path d="M1093.5 306V312" stroke="#333" stroke-width="1"/><path d="M1102.5 306V312" stroke="#333" stroke-width="1"/><path d="M1111.5 306V312" stroke="#333" stroke-width="1"/><path d="M1120.5 306V312" stroke="#333" stroke-width="1"/><path d="M1128.5 306V312" stroke="#333" stroke-width="1"/><path d="M1137.5 306V312" stroke="#333" stroke-width="1"/><path d="M1146.5 306V312" stroke="#333" stroke-width="1"/><path d="M1155.5 306V312" stroke="#333" stroke-width="1"/><path d="M1164.5 306V312" stroke="#333" stroke-width="1"/><path d="M1173.5 306V312" stroke="#333" stroke-width="1"/><path d="M1182.5 306V312" stroke="#333" stroke-width="1"/><path d="M1191.5 306V312" stroke="#333" stroke-width="1"/><path d="M1200.5 306V312" stroke="#333" stroke-width="1"/><path d="M1209.5 306V312" stroke="#333" stroke-width="1"/><path d="M1218.5 306V312" stroke="#333" stroke-width="1"/><path d="M1227.5 306V312" stroke="#333" stroke-width="1"/><path d="M1236.5 306V312" stroke="#333" stroke-width="1"/><text x="972.00 979.00 986.00 989.00 996.00 1003.00 1006.00 1013.00" y="177" font-size="12" fill="#444" font-weight="normal" >15.00 TB</text><text x="972.00 979.00 986.00 989.00 996.00 1003.00 1006.00 1013.00" y="221" font-size="12" fill="#444" font-weight="normal" >10.00 TB</text><text x="979.00 986.00 989.00 996.00 1003.00 1006.00 1013.00" y="266" font-size="12" fill="#444" font-weight="normal" >5.00 TB</text><text x="970.00 977.00 980.00 987.00 994.00 997.00 1005.00 1011.00 1014.00" y="310.5" font-size="12" fill="#444" font-weight="normal" >0.00 Byte</text><text x="-30.00 -20.00 -12.00 -3.00 5.00 13.00 17.00 22.00" y="0" font-size="14" fill="#333" font-weight="bold" transform="translate(960.5,239.4) rotate(-90)">Capacity</text><text x="0" y="0" font-size="12" fill="#444" font-weight="normal" text-anchor="end" transform="translate(1044.3,324.2) rotate(-45)">12:32</text><text x="0" y="0" font-size="12" fill="#444" font-weight="normal" text-anchor="end" transform="translate(1071.6,324.2) rotate(-45)">15:32</text><text x="0" y="0" font-size="12" fill="#444" font-weight="normal" text-anchor="end" transform="translate(1098.5,324.2) rotate(-45)">18:32</text><text x="0" y="0" font-size="12" fill="#444" font-weight="normal" text-anchor="end" transform="translate(1125.7,324.2) rotate(-45)">21:32</text><text x="0" y="0" font-size="12" fill="#444" font-weight="normal" text-anchor="end" transform="translate(1151.6,324.2) rotate(-45)">00:32</text><text x="0" y="0" font-size="12" fill="#444" font-weight="normal" text-anchor="end" transform="translate(1178.4,324.2) rotate(-45)">03:32</text><text x="0" y="0" font-size="12" fill="#444" font-weight="normal" text-anchor="end" transform="translate(1205.7,324.2) rotate(-45)">06:32</text><text x="0" y="0" font-size="12" fill="#444" font-weight="normal" text-anchor="end" transform="translate(1241.4,324.2) rotate(-45)">11:32</text><text x="1117.50 1126.50 1130.50 1142.50" y="371" font-size="14" fill="#333" font-weight="bold" >Time</text><rect x="1246.5" y="215.5" width="81" height="47" fill="#fff" stroke="#000" stroke-width="1"/><path d="M1252 228.5H1269" stroke="#e9a82b" stroke-width="1.5"/><circle cx="1260.5" cy="228.5" r="4" fill="#e9a82b"/><text x="1272.00 1279.00 1286.00 1289.00 1296.00" y="232" font-size="12" fill="#222" font-weight="normal" >Total</text><path d="M1252 250.5H1269" stroke="#b5001f" stroke-width="1.5"/><path d="M1257 247L1264 254M1264 247L1257 254" stroke="#b5001f" stroke-width="3.6" stroke-linecap="round"/><text x="1272.00 1280.00 1283.00 1286.00 1293.00 1299.00 1306.00 1309.00 1316.00" y="254" font-size="12" fill="#222" font-weight="normal" >Allocated</text><path d="M1004 471.5H1316" stroke="#cfcfcf" stroke-width="1"/><path d="M1004 486.5H1316" stroke="#cfcfcf" stroke-width="1"/><path d="M1004 500.5H1316" stroke="#cfcfcf" stroke-width="1"/><path d="M1004 514.5H1316" stroke="#cfcfcf" stroke-width="1"/><path d="M1004 528.5H1316" stroke="#cfcfcf" stroke-width="1"/><path d="M1004 542.5H1316" stroke="#cfcfcf" stroke-width="1"/><path d="M1004 557.5H1316" stroke="#cfcfcf" stroke-width="1"/><path d="M1004 571.5H1316" stroke="#cfcfcf" stroke-width="1"/><path d="M1004 585.5H1316" stroke="#cfcfcf" stroke-width="1"/><path d="M1004.5 457V599.5" stroke="#333" stroke-width="1"/><path d="M998 599.5H1317" stroke="#333" stroke-width="1"/><path d="M998 457.5H1004" stroke="#333" stroke-width="1"/><path d="M998 471.5H1004" stroke="#333" stroke-width="1"/><path d="M998 486.5H1004" stroke="#333" stroke-width="1"/><path d="M998 500.5H1004" stroke="#333" stroke-width="1"/><path d="M998 514.5H1004" stroke="#333" stroke-width="1"/><path d="M998 528.5H1004" stroke="#333" stroke-width="1"/><path d="M998 542.5H1004" stroke="#333" stroke-width="1"/><path d="M998 557.5H1004" stroke="#333" stroke-width="1"/><path d="M998 571.5H1004" stroke="#333" stroke-width="1"/><path d="M998 585.5H1004" stroke="#333" stroke-width="1"/><path d="M998 599.5H1004" stroke="#333" stroke-width="1"/><text x="979.50 986.50" y="461.7" font-size="12" fill="#444" font-weight="normal" >25</text><text x="979.50 986.50" y="490.09999999999997" font-size="12" fill="#444" font-weight="normal" >20</text><text x="979.50 986.50" y="518.5" font-size="12" fill="#444" font-weight="normal" >15</text><text x="979.50 986.50" y="546.9" font-size="12" fill="#444" font-weight="normal" >10</text><text x="986.50" y="575.3" font-size="12" fill="#444" font-weight="normal" >5</text><text x="986.50" y="603.7" font-size="12" fill="#444" font-weight="normal" >0</text><rect x="1015" y="457" width="18" height="142" fill="#5ec90b"/><rect x="1041" y="457" width="18" height="142" fill="#4dd6b8"/><text x="1016.00 1024.00" y="469" font-size="14" fill="#1e2e1e" font-weight="normal" >25</text><text x="1042.00 1050.00" y="469" font-size="14" fill="#1e2e1e" font-weight="normal" >25</text><path d="M1037.5 599V605" stroke="#333" stroke-width="1"/><path d="M1098.5 599V605" stroke="#333" stroke-width="1"/><path d="M1160.5 599V605" stroke="#333" stroke-width="1"/><path d="M1222.5 599V605" stroke="#333" stroke-width="1"/><path d="M1284.5 599V605" stroke="#333" stroke-width="1"/><text x="1081.30" y="595" font-size="14" fill="#444" font-weight="normal" >0</text><text x="1107.30" y="595" font-size="14" fill="#444" font-weight="normal" >0</text><text x="1143.50" y="595" font-size="14" fill="#444" font-weight="normal" >0</text><text x="1169.50" y="595" font-size="14" fill="#444" font-weight="normal" >0</text><text x="1205.40" y="595" font-size="14" fill="#444" font-weight="normal" >0</text><text x="1231.40" y="595" font-size="14" fill="#444" font-weight="normal" >0</text><text x="1267.20" y="595" font-size="14" fill="#444" font-weight="normal" >0</text><text x="1293.20" y="595" font-size="14" fill="#444" font-weight="normal" >0</text><text x="1019.70 1026.70 1029.70 1036.70 1043.70" y="621" font-size="12" fill="#444" font-weight="normal" >&lt; 25%</text><text x="1066.80 1073.80 1080.80 1091.80 1094.80 1101.80 1104.80 1111.80 1118.80" y="621" font-size="12" fill="#444" font-weight="normal" >25% ~ 50%</text><text x="1190.90 1197.90 1204.90 1215.90 1218.90 1225.90 1228.90 1235.90 1242.90" y="621" font-size="12" fill="#444" font-weight="normal" >75% ~ 90%</text><text x="1263.20 1270.20 1277.20 1280.20 1287.20 1294.20" y="621" font-size="12" fill="#444" font-weight="normal" >&gt;= 90%</text><text x="-21.00 -11.00 -2.00 7.00 16.00" y="0" font-size="14" fill="#333" font-weight="bold" transform="translate(969.6,527.8) rotate(-90)">Count</text><text x="1129.00 1139.00 1147.00 1152.00 1160.00 1169.00 1178.00 1183.00" y="646" font-size="14" fill="#333" font-weight="bold" >Category</text></svg>
<div id="sb"></div>
<div class="abs" style="left:1354px;top:110px;width:0;height:0;border-left:3.5px solid transparent;border-right:3.5px solid transparent;border-bottom:4px solid #555"></div>
<div class="abs" style="left:1351px;top:434px;width:13px;height:244px;background:#a9a9a9;border:1px solid #9a9a9a"></div>
<div class="abs" style="left:1354px;top:757px;width:0;height:0;border-left:3.5px solid transparent;border-right:3.5px solid transparent;border-top:4px solid #555"></div>
</body></html>
